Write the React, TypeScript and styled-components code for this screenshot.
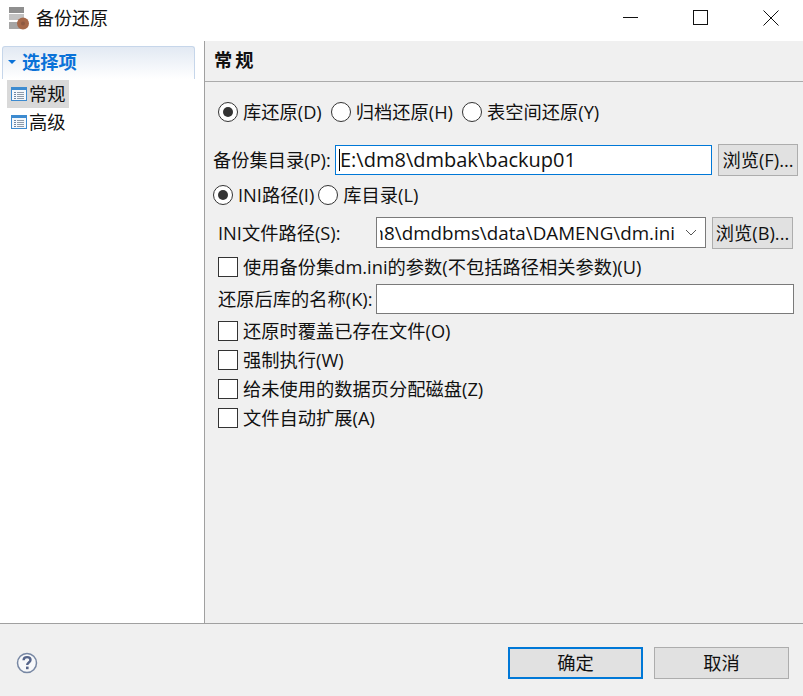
import React from 'react'
import styled, { createGlobalStyle } from 'styled-components'

const FONT = `"Open Sans", "Noto Sans CJK SC", sans-serif`

const GlobalStyle = createGlobalStyle`
  html, body {
    margin: 0;
    padding: 0;
    background: #f0f0f0;
  }
  * {
    box-sizing: border-box;
  }
`

const Dialog = styled.div`
  display: flex;
  flex-direction: column;
  width: 803px;
  height: 696px;
  overflow: hidden;
  background: #f0f0f0;
  color: #111;
  font-family: ${FONT};
  font-size: 18.25px;
  line-height: 24px;
`

const TitleBar = styled.div`
  display: flex;
  align-items: center;
  height: 41px;
  padding: 0 0 5px 8px;
  background: #fff;
  flex-shrink: 0;
`

const TitleText = styled.span`
  margin-left: 6px;
  font-size: 18px;
`

const WindowButtons = styled.div`
  display: flex;
  gap: 54px;
  margin-left: auto;
  padding-right: 24px;
`

const WindowButton = styled.div`
  display: flex;
  width: 16px;
  height: 16px;
`

const Body = styled.div`
  display: flex;
  flex: 1;
  min-height: 0;
`

const Sidebar = styled.div`
  width: 205px;
  flex-shrink: 0;
  background: #fff;
  border-right: 1px solid #a0a0a0;
  padding: 5px 9px 0 2px;
`

const SectionHead = styled.div`
  display: flex;
  align-items: center;
  height: 33px;
  padding: 0 0 2px 5px;
  border: 1px solid #c6d6ea;
  border-bottom: none;
  border-radius: 3px 3px 0 0;
  background: linear-gradient(#e2e9f3, #ffffff);
  color: #0a72d8;
  font-weight: 700;
`

const SectionArrow = styled.span`
  width: 0;
  height: 0;
  margin-right: 6px;
  border-left: 4px solid transparent;
  border-right: 4px solid transparent;
  border-top: 4px solid #0a72d8;
`

const TreeList = styled.div`
  display: flex;
  flex-direction: column;
  align-items: flex-start;
  margin-top: 1px;
`

const TreeRow = styled.div<{ $selected?: boolean }>`
  display: inline-flex;
  align-items: center;
  height: 28px;
  margin-left: 5px;
  padding: 0 3px 0 4px;
  background: ${p => (p.$selected ? '#d9d9d9' : 'transparent')};
`

const TreeIcon = styled.svg`
  margin-right: 2px;
`

const Main = styled.div`
  flex: 1;
  min-width: 0;
`

const MainHead = styled.div`
  display: flex;
  align-items: center;
  height: 41px;
  padding: 0 0 3px 9px;
  background: #f0f0f0;
  border-bottom: 1px solid #ababab;
  font-weight: 700;
  letter-spacing: 3px;
`

const Form = styled.div`
  display: flex;
  flex-direction: column;
  padding: 0 5px 0 8px;
`

const OptionRow = styled.div<{ $gap?: number; $indent?: number; $top?: number; $right?: number }>`
  display: flex;
  align-items: center;
  gap: ${p => p.$gap ?? 0}px;
  margin-top: ${p => p.$top ?? 0}px;
  margin-left: ${p => p.$indent ?? 0}px;
  margin-right: ${p => p.$right ?? 0}px;
`

const Option = styled.label`
  display: flex;
  align-items: center;
  height: 24px;
  white-space: nowrap;
`

const RadioMark = styled.span<{ $checked?: boolean }>`
  display: flex;
  align-items: center;
  justify-content: center;
  width: 20px;
  height: 20px;
  margin-right: 5px;
  border: 1px solid #333;
  border-radius: 50%;
  background: #fff;

  &::after {
    content: '';
    display: ${p => (p.$checked ? 'block' : 'none')};
    width: 10px;
    height: 10px;
    border-radius: 50%;
    background: #333;
  }
`

const CheckMark = styled.span`
  width: 20px;
  height: 20px;
  margin-right: 5px;
  border: 1px solid #333;
  background: #fff;
`

const FieldLabel = styled.span<{ $width: number }>`
  width: ${p => p.$width}px;
  flex-shrink: 0;
  white-space: nowrap;
`

const TextField = styled.div<{ $focused?: boolean }>`
  display: flex;
  align-items: center;
  flex: 1;
  min-width: 0;
  height: 30px;
  padding-left: 3px;
  overflow: hidden;
  white-space: nowrap;
  font-size: 20px;
  background: #fff;
  border: 1px solid ${p => (p.$focused ? '#0078d7' : '#7a7a7a')};
`

const Caret = styled.span`
  width: 1px;
  height: 22px;
  background: #000;
`

const ComboField = styled(TextField)`
  flex: none;
  align-self: flex-start;
  width: 330px;
  height: 31px;
  position: relative;
  font-size: 18.8px;
`

const ComboText = styled.span`
  display: flex;
  justify-content: flex-end;
  width: 295px;
  overflow: hidden;
`

const ComboArrow = styled.svg`
  position: absolute;
  right: 8px;
  top: 11px;
`

const Button = styled.div<{ $width: number; $primary?: boolean }>`
  display: flex;
  align-items: center;
  justify-content: center;
  width: ${p => p.$width}px;
  height: 32px;
  flex-shrink: 0;
  background: #e1e1e1;
  border: ${p => (p.$primary ? '2px solid #0078d7' : '1px solid #adadad')};
  white-space: nowrap;
`

const BrowseButton = styled(Button)`
  margin-left: 6px;
`

const Footer = styled.div`
  display: flex;
  align-items: center;
  height: 73px;
  flex-shrink: 0;
  padding: 6px 14px 0 16px;
  border-top: 1px solid #a0a0a0;
`

const FooterButtons = styled.div`
  display: flex;
  gap: 11px;
  margin-left: auto;
`

const AppIcon = () => (
  <svg width="22" height="24" viewBox="0 0 22 24">
    <defs>
      <filter id="soft">
        <feGaussianBlur stdDeviation="0.6" />
      </filter>
    </defs>
    <g filter="url(#soft)">
      <rect x="1" y="1" width="15" height="6" fill="#8f8f8f" />
      <rect x="1" y="8" width="15" height="6" fill="#c2c2c2" />
      <rect x="1" y="16" width="15" height="7" fill="#a5a5a5" />
      <circle cx="15" cy="17.5" r="6" fill="#a5674a" />
      <circle cx="15" cy="17.5" r="2" fill="#8e5a42" />
    </g>
  </svg>
)

const ListIcon = () => (
  <TreeIcon width="16" height="14" viewBox="0 0 16 14">
    <rect x="0.5" y="0.5" width="15" height="13" fill="#f4f8fc" stroke="#3d8bd0" />
    <rect x="1" y="1" width="14" height="2" fill="#3d8bd0" />
    <rect x="3" y="5" width="2" height="1" fill="#6d87a6" />
    <rect x="6" y="5" width="7" height="1" fill="#8d9baa" />
    <rect x="3" y="7" width="2" height="1" fill="#6d87a6" />
    <rect x="6" y="7" width="7" height="1" fill="#8d9baa" />
    <rect x="3" y="9" width="2" height="1" fill="#6d87a6" />
    <rect x="6" y="9" width="7" height="1" fill="#8d9baa" />
    <rect x="3" y="11" width="2" height="1" fill="#6d87a6" />
    <rect x="6" y="11" width="7" height="1" fill="#8d9baa" />
  </TreeIcon>
)

const HelpIcon = () => (
  <svg width="22" height="22" viewBox="0 0 22 22">
    <circle cx="11" cy="11" r="9.5" fill="#f7f8fa" stroke="#7787a3" strokeWidth="1.5" />
    <path d="M7.6 8.3c0-2 1.5-3.2 3.5-3.2s3.4 1.1 3.4 2.9c0 2.5-3.3 2.6-3.3 5" fill="none" stroke="#56658a" strokeWidth="2.4" />
    <rect x="10" y="14.6" width="2.6" height="2.6" fill="#56658a" />
  </svg>
)

const App = () => {
  return (
    <Dialog>
      <GlobalStyle />
      <TitleBar>
        <AppIcon />
        <TitleText>备份还原</TitleText>
        <WindowButtons>
          <WindowButton>
            <svg width="16" height="16" viewBox="0 0 16 16">
              <rect x="0" y="7" width="15" height="1" fill="#111" />
            </svg>
          </WindowButton>
          <WindowButton>
            <svg width="16" height="16" viewBox="0 0 16 16">
              <rect x="0.5" y="0.5" width="14" height="14" fill="none" stroke="#111" />
            </svg>
          </WindowButton>
          <WindowButton>
            <svg width="16" height="16" viewBox="0 0 16 16">
              <path d="M0.5 0.5L15.5 15.5M15.5 0.5L0.5 15.5" stroke="#111" strokeWidth="1" />
            </svg>
          </WindowButton>
        </WindowButtons>
      </TitleBar>
      <Body>
        <Sidebar>
          <SectionHead>
            <SectionArrow />
            选择项
          </SectionHead>
          <TreeList>
            <TreeRow $selected>
              <ListIcon />
              常规
            </TreeRow>
            <TreeRow>
              <ListIcon />
              高级
            </TreeRow>
          </TreeList>
        </Sidebar>
        <Main>
          <MainHead>常规</MainHead>
          <Form>
            <OptionRow $gap={9} $indent={5} $top={18}>
              <Option><RadioMark $checked />库还原(D)</Option>
              <Option><RadioMark />归档还原(H)</Option>
              <Option><RadioMark />表空间还原(Y)</Option>
            </OptionRow>
            <OptionRow $top={20}>
              <FieldLabel $width={122}>备份集目录(P):</FieldLabel>
              <TextField $focused><Caret />E:\dm8\dmbak\backup01</TextField>
              <BrowseButton $width={80}>浏览(F)...</BrowseButton>
            </OptionRow>
            <OptionRow $gap={4} $top={7}>
              <Option><RadioMark $checked />INI路径(I)</Option>
              <Option><RadioMark />库目录(L)</Option>
            </OptionRow>
            <OptionRow $indent={5} $top={10}>
              <FieldLabel $width={158}>INI文件路径(S):</FieldLabel>
              <ComboField>
                <ComboText><span>E:\dm8\dmdbms\data\DAMENG\dm.ini</span></ComboText>
                <ComboArrow width="12" height="8" viewBox="0 0 12 8">
                  <path d="M1 1l5 5 5-5" fill="none" stroke="#555" />
                </ComboArrow>
              </ComboField>
              <BrowseButton $width={81}>浏览(B)...</BrowseButton>
            </OptionRow>
            <OptionRow $indent={5} $top={6}>
              <Option><CheckMark />使用备份集dm.ini的参数(不包括路径相关参数)(U)</Option>
            </OptionRow>
            <OptionRow $indent={5} $right={4} $top={5}>
              <FieldLabel $width={158}>还原后库的名称(K):</FieldLabel>
              <TextField />
            </OptionRow>
            <OptionRow $indent={5} $top={5}>
              <Option><CheckMark />还原时覆盖已存在文件(O)</Option>
            </OptionRow>
            <OptionRow $indent={5} $top={5}>
              <Option><CheckMark />强制执行(W)</Option>
            </OptionRow>
            <OptionRow $indent={5} $top={5}>
              <Option><CheckMark />给未使用的数据页分配磁盘(Z)</Option>
            </OptionRow>
            <OptionRow $indent={5} $top={5}>
              <Option><CheckMark />文件自动扩展(A)</Option>
            </OptionRow>
          </Form>
        </Main>
      </Body>
      <Footer>
        <HelpIcon />
        <FooterButtons>
          <Button $width={135} $primary>确定</Button>
          <Button $width={135}>取消</Button>
        </FooterButtons>
      </Footer>
    </Dialog>
  )
}

export default App
